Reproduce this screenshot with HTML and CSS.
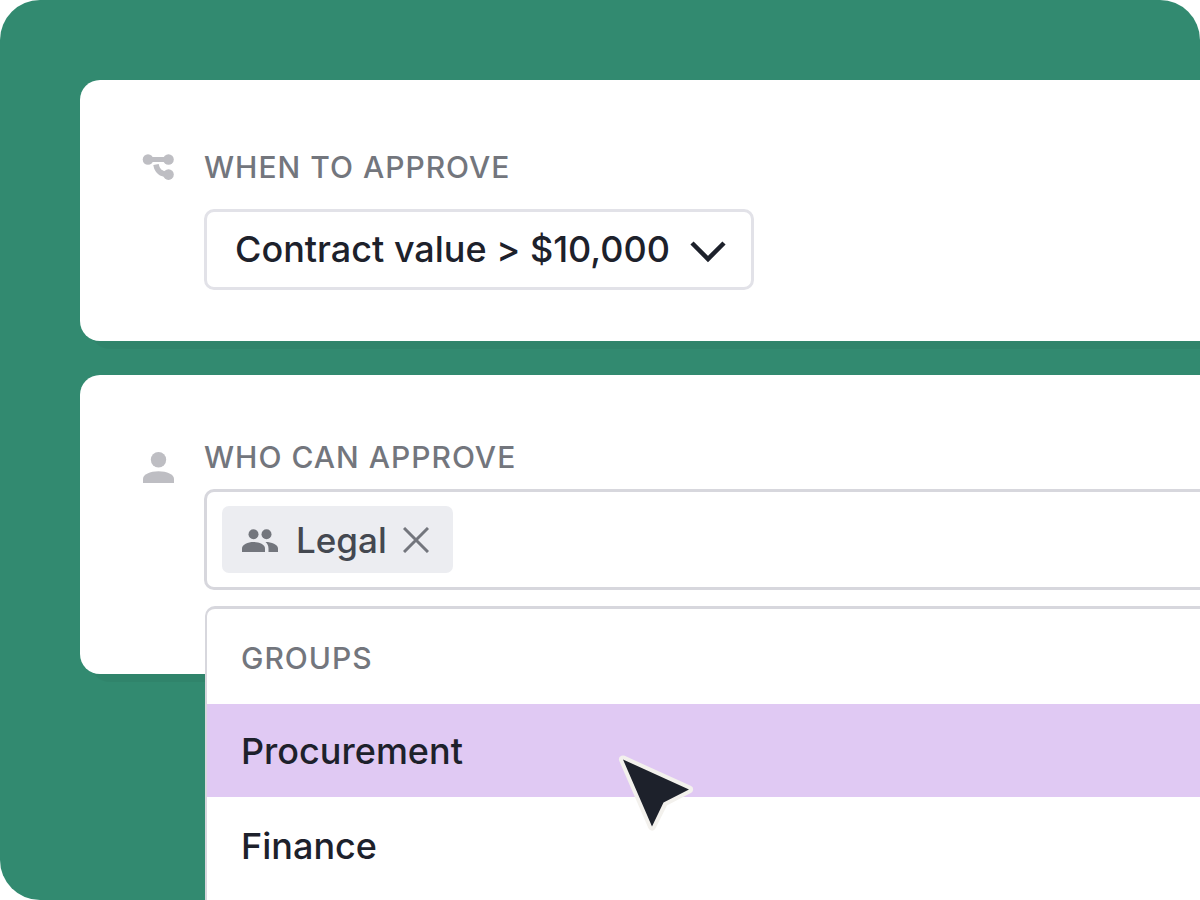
FILE: index.html
```html
<!DOCTYPE html>
<html lang="en">
<head>
    <meta charset="utf-8">
    <title>Approval rule</title>
    <link rel="stylesheet" href="styles.css">
</head>
<body>
    <main class="stage">
        <section class="card card-when">
            <svg class="card-icon" viewBox="0 0 32 32" aria-hidden="true">
                <path d="M6 9.500H26" stroke="#bebec3" stroke-width="5" fill="none"/>
                <path d="M14 14.500c1 6 4 9.800 12 9.800" stroke="#bebec3" stroke-width="5.500" fill="none"/>
                <circle cx="6" cy="9.500" r="5.300" fill="#bebec3"/>
                <circle cx="26.500" cy="9.500" r="5.300" fill="#bebec3"/>
                <circle cx="26.500" cy="24.600" r="5.300" fill="#bebec3"/>
            </svg>
            <div class="card-body">
                <label class="label" for="condition">WHEN TO APPROVE</label>
                <div class="select">
                    <select id="condition">
                        <option>Contract value &gt; $10,000</option>
                    </select>
                    <svg class="chevron" viewBox="0 0 36 24" aria-hidden="true">
                        <path d="M2 3l16 16L34 3" fill="none" stroke="#1d212b" stroke-width="4.500"/>
                    </svg>
                </div>
            </div>
        </section>

        <section class="card card-who">
            <svg class="card-icon" viewBox="0 0 32 32" aria-hidden="true">
                <circle cx="16.500" cy="7.700" r="7.700" fill="#bebec3"/>
                <path d="M1 31V27C1 22.500 8 19.300 16.500 19.300S32 22.500 32 27v4z" fill="#bebec3"/>
            </svg>
            <div class="card-body">
                <label class="label" for="approver">WHO CAN APPROVE</label>
                <div class="field">
                    <span class="chip">
                        <svg class="chip-icon" viewBox="0 0 36 24" aria-hidden="true">
                            <g fill="#73767d">
                                <circle cx="11.500" cy="6.200" r="5"/>
                                <circle cx="24.500" cy="6.200" r="5"/>
                                <path d="M0 24v-3.500c0-4 6-6.500 11.500-6.500S23 16.500 23 20.500V24z"/>
                                <path d="M23.500 14c6 0 12.500 2.500 12.500 6.500V24h-9.500v-3.500c0-2.700-1.200-4.900-3-6.500z"/>
                            </g>
                        </svg>
                        Legal
                        <button class="chip-remove" type="button" aria-label="Remove Legal">
                            <svg viewBox="0 0 26 26" aria-hidden="true">
                                <path d="M1 1l24 24M25 1L1 25" stroke="#73767d" stroke-width="3"/>
                            </svg>
                        </button>
                    </span>
                    <input id="approver" class="field-input" type="text">
                </div>
                <div class="menu">
                    <h2 class="menu-title">GROUPS</h2>
                    <button class="menu-item active" type="button">Procurement</button>
                    <button class="menu-item" type="button">Finance</button>
                </div>
            </div>
        </section>

        <svg class="cursor" viewBox="0 0 80 80" aria-hidden="true">
            <path d="M7 4.500L73 34.500L48 47.500L36 71.500z" fill="#f3f1ed" stroke="#f3f1ed" stroke-width="8" stroke-linejoin="round"/>
            <path d="M7 4.500L73 34.500L47.500 47.500L36 71.500z" fill="#1d212b"/>
        </svg>
    </main>
</body>
</html>
```
FILE: styles.css
```css
* {
    box-sizing: border-box;
}

body {
    margin: 0;
    background: #fff;
    color: #1d212b;
    font-family: Inter, "Liberation Sans", sans-serif;
    overflow: hidden;
}

.stage {
    position: relative;
    height: 100vh;
    padding: 80px 0 0 80px;
    overflow: hidden;
    border-radius: 40px 40px 0 40px;
    background: #328a70;
}

/* cards run off the right side of the stage */
.card {
    display: flex;
    gap: 30px;
    border-radius: 20px 0 0 20px;
    background: #fff;
    box-shadow: 10px 8px 0 rgba(0, 0, 0, 0.04);
}

.card-when {
    padding: 70px 0 51px 62px;
    margin-bottom: 34px;
}

.card-who {
    padding: 65px 0 84px 62px;
}

.card-icon {
    flex: none;
    width: 32px;
    height: 32px;
}

.card-who .card-icon {
    margin-top: 12px;
}

.card-body {
    position: relative;
    flex: 1;
}

.label,
.menu-title {
    display: block;
    color: #73767d;
    font-size: 30px;
    font-weight: 500;
    letter-spacing: 1px;
    line-height: 35px;
}

.card-when .label {
    margin-bottom: 24px;
}

.card-who .label {
    margin-bottom: 14px;
}

.select {
    position: relative;
    display: inline-block;
    vertical-align: top;
}

.select select {
    display: block;
    height: 81px;
    padding: 0 80px 2px 28px;
    border: 3px solid #e2e2e8;
    border-radius: 10px;
    appearance: none;
    background: #fff;
    color: inherit;
    font: 500 36px Inter, "Liberation Sans", sans-serif;
    font-feature-settings: "calt" 0;
}

.chevron {
    position: absolute;
    top: 31px;
    right: 28px;
    width: 36px;
    height: 24px;
    pointer-events: none;
}

.field {
    display: flex;
    align-items: center;
    height: 101px;
    padding: 0 15px;
    border: 3px solid #d7d7dd;
    border-right: 0;
    border-radius: 10px 0 0 10px;
}

.chip {
    display: flex;
    align-items: center;
    height: 67px;
    padding: 0 24px 0 20px;
    border-radius: 7px;
    background: #ecedf1;
    color: #444850;
    font-size: 35px;
    font-weight: 500;
}

.chip-icon {
    width: 36px;
    height: 24px;
    margin-right: 18px;
}

.chip-remove {
    width: 26px;
    height: 26px;
    margin-left: 16px;
    padding: 0;
    border: 0;
    background: none;
}

.chip-remove svg {
    display: block;
}

.field-input {
    flex: 1;
    min-width: 0;
    height: 67px;
    border: 0;
    outline: 0;
    font: 500 36px Inter, "Liberation Sans", sans-serif;
}

.menu {
    position: absolute;
    top: 166px;
    left: 1px;
    right: 0;
    height: 100vh;
    border: solid #d7d7dd;
    border-width: 3px 0 0 2px;
    border-radius: 10px 0 0 0;
    background: #fff;
}

.menu-title {
    margin: 0;
    padding: 32px 34px 28px;
}

.menu-item {
    display: block;
    width: 100%;
    height: 93px;
    margin-bottom: 2px;
    padding: 0 34px;
    border: 0;
    background: none;
    color: inherit;
    font: 500 36px Inter, "Liberation Sans", sans-serif;
    text-align: left;
}

.menu-item.active {
    background: #e0c9f3;
}

.cursor {
    position: absolute;
    top: 755px;
    left: 616px;
    width: 80px;
    height: 80px;
    overflow: visible;
}
```
